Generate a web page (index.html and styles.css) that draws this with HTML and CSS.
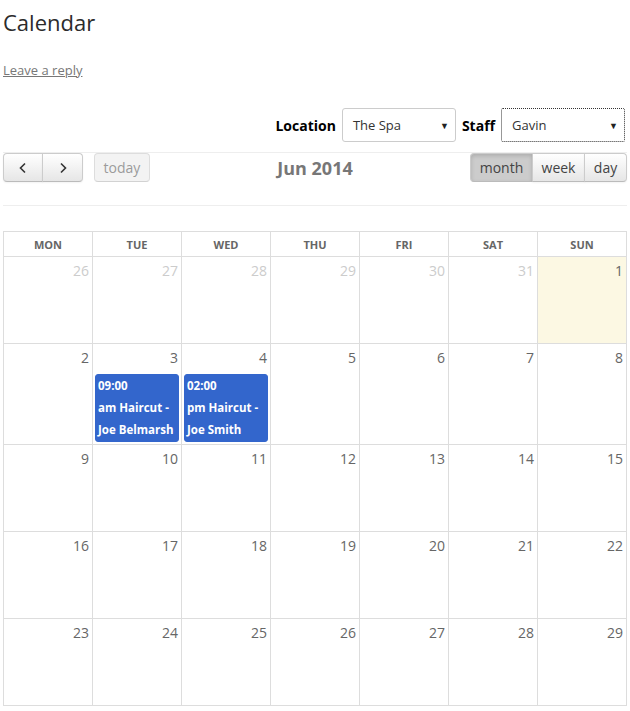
FILE: index.html
```html
<!DOCTYPE html>
<html lang="en">
<head>
  <meta charset="UTF-8">
  <title>Calendar</title>
  <link rel="stylesheet" href="styles.css">
</head>
<body>
  <div class="page">
    <h1 class="title">Calendar</h1>
    <a class="reply" href="#">Leave a reply</a>

    <!-- filters -->
    <div class="filters">
      <label class="filter-label">Location</label>
      <div class="select loc">The Spa<span class="caret">&#9660;</span></div>
      <label class="filter-label">Staff</label>
      <div class="select staff focused">Gavin<span class="caret">&#9660;</span></div>
    </div>

    <!-- calendar toolbar -->
    <div class="toolbar">
      <div class="left">
        <div class="btn-group">
          <button class="btn arrow">
            <svg width="10" height="12" viewBox="0 0 10 12"><path d="M7 1.5 L2.5 6 L7 10.5" fill="none" stroke="#333" stroke-width="1.6"/></svg>
          </button>
          <button class="btn arrow">
            <svg width="10" height="12" viewBox="0 0 10 12"><path d="M3 1.5 L7.5 6 L3 10.5" fill="none" stroke="#333" stroke-width="1.6"/></svg>
          </button>
        </div>
        <button class="btn today" disabled>today</button>
      </div>
      <h2 class="month-title">Jun 2014</h2>
      <div class="btn-group views">
        <button class="btn active">month</button>
        <button class="btn">week</button>
        <button class="btn">day</button>
      </div>
    </div>

    <table class="cal">
      <thead>
        <tr>
          <th>Mon</th><th>Tue</th><th>Wed</th><th>Thu</th><th>Fri</th><th>Sat</th><th>Sun</th>
        </tr>
      </thead>
      <tbody>
        <tr>
          <td class="other"><div class="num">26</div></td>
          <td class="other"><div class="num">27</div></td>
          <td class="other"><div class="num">28</div></td>
          <td class="other"><div class="num">29</div></td>
          <td class="other"><div class="num">30</div></td>
          <td class="other"><div class="num">31</div></td>
          <td class="today-cell"><div class="num">1</div></td>
        </tr>
        <tr>
          <td><div class="num">2</div></td>
          <td><div class="num">3</div><div class="event">09:00<br>am Haircut -<br>Joe Belmarsh</div></td>
          <td><div class="num">4</div><div class="event">02:00<br>pm Haircut -<br>Joe Smith</div></td>
          <td><div class="num">5</div></td>
          <td><div class="num">6</div></td>
          <td><div class="num">7</div></td>
          <td><div class="num">8</div></td>
        </tr>
        <tr>
          <td><div class="num">9</div></td>
          <td><div class="num">10</div></td>
          <td><div class="num">11</div></td>
          <td><div class="num">12</div></td>
          <td><div class="num">13</div></td>
          <td><div class="num">14</div></td>
          <td><div class="num">15</div></td>
        </tr>
        <tr>
          <td><div class="num">16</div></td>
          <td><div class="num">17</div></td>
          <td><div class="num">18</div></td>
          <td><div class="num">19</div></td>
          <td><div class="num">20</div></td>
          <td><div class="num">21</div></td>
          <td><div class="num">22</div></td>
        </tr>
        <tr>
          <td><div class="num">23</div></td>
          <td><div class="num">24</div></td>
          <td><div class="num">25</div></td>
          <td><div class="num">26</div></td>
          <td><div class="num">27</div></td>
          <td><div class="num">28</div></td>
          <td><div class="num">29</div></td>
        </tr>
      </tbody>
    </table>
  </div>
</body>
</html>
```

FILE: styles.css
```css
* {
  margin: 0;
  padding: 0;
  box-sizing: border-box;
}
body {
  font-family: "Open Sans", Arial, sans-serif;
  background-color: #ffffff;
  color: #333;
}
.page {
  padding: 0 3px;
}
.title {
  font-size: 22px;
  font-weight: normal;
  line-height: 30px;
  padding-top: 7px;
  color: #2b2b2b;
}
.reply {
  display: inline-block;
  margin-top: 24px;
  font-size: 13px;
  color: #777;
  text-decoration: underline;
}

/* filters */
.filters {
  display: flex;
  justify-content: flex-end;
  align-items: center;
  gap: 6px;
  margin-top: 28px;
  padding-right: 2px;
}
.filter-label {
  font-size: 14px;
  font-weight: bold;
  color: #000;
}
.select {
  height: 34px;
  border: 1px solid #ccc;
  border-radius: 3px;
  display: flex;
  align-items: center;
  justify-content: space-between;
  padding: 0 6px 0 10px;
  font-size: 13px;
  color: #333;
}
.loc {
  width: 114px;
}
.staff {
  width: 124px;
}
.focused {
  border: 1px dotted #333;
  border-radius: 2px;
}
.caret {
  font-size: 9px;
  color: #222;
}

/* toolbar */
.toolbar {
  display: flex;
  justify-content: space-between;
  align-items: flex-start;
  margin-top: 10px;
  border-top: 1px solid #eee;
  border-bottom: 1px solid #eee;
  height: 54px;
}
.left {
  display: flex;
  gap: 11px;
}
.btn-group {
  display: flex;
}
.btn {
  font-family: "Open Sans", Arial, sans-serif;
  font-size: 14px;
  height: 29px;
  padding: 0 8px;
  color: #333;
  border: 1px solid #ccc;
  border-bottom-color: #bbb;
  background: linear-gradient(#fff, #e6e6e6);
  box-shadow: inset 0 1px 0 rgba(255, 255, 255, 0.2), 0 1px 2px rgba(0, 0, 0, 0.05);
  cursor: pointer;
}
.btn-group .btn + .btn {
  margin-left: -1px;
}
.btn-group .btn:first-child {
  border-radius: 4px 0 0 4px;
}
.btn-group .btn:last-child {
  border-radius: 0 4px 4px 0;
}
.arrow {
  width: 40px;
  display: flex;
  align-items: center;
  justify-content: center;
}
.arrow:last-child {
  width: 41px;
}
.today {
  width: 56px;
  border-radius: 4px;
  opacity: 0.65;
  color: #666;
  background: #eee;
  box-shadow: none;
}
.month-title {
  font-size: 18px;
  font-weight: bold;
  color: #777;
  line-height: 29px;
  margin-top: 1px;
  margin-left: 10px;
}
.views .btn {
  font-size: 14px;
  color: #444;
}
.views .btn:nth-child(1) {
  width: 63px;
}
.views .btn:nth-child(2) {
  width: 53px;
}
.views .btn:nth-child(3) {
  width: 43px;
}
.views .active {
  background: #ccc;
  box-shadow: inset 0 2px 4px rgba(0, 0, 0, 0.15);
}

/* month grid */
.cal {
  width: 100%;
  margin-top: 25px;
  border-collapse: collapse;
  table-layout: fixed;
}
.cal th,
.cal td {
  border: 1px solid #ddd;
}
.cal th {
  height: 25px;
  font-size: 11px;
  font-weight: bold;
  text-transform: uppercase;
  color: #666;
}
.cal td {
  height: 87px;
  vertical-align: top;
}
.num {
  text-align: right;
  font-size: 14px;
  line-height: 20px;
  padding: 4px 3px 0 0;
  color: #666;
}
.other .num {
  color: #ccc;
}
.today-cell {
  background-color: #fcf8e3;
}
.event {
  margin: 6px 2px 2px;
  padding: 0 2px;
  background-color: #3366cc;
  border: 1px solid #3366cc;
  border-radius: 3px;
  color: #fff;
  font-size: 11.5px;
  font-weight: bold;
  line-height: 22px;
  white-space: nowrap;
  overflow: hidden;
}
```
